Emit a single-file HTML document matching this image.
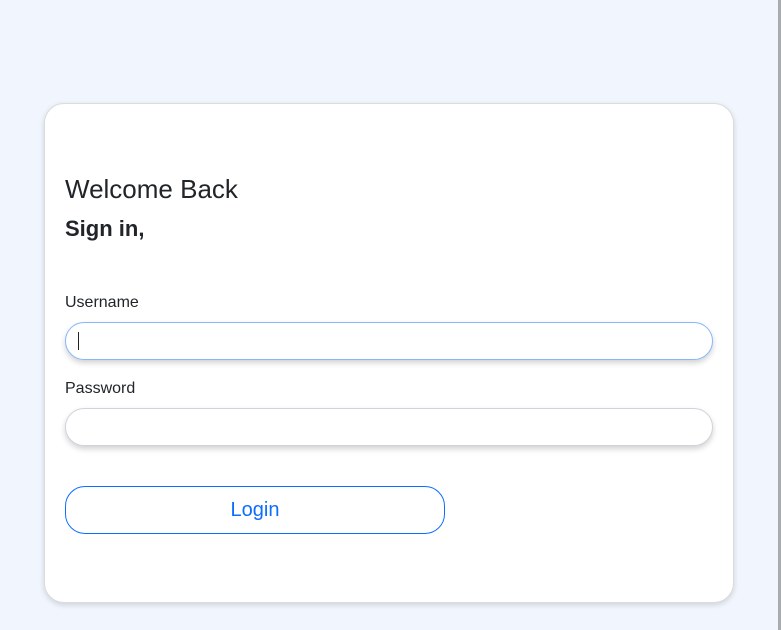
<!DOCTYPE html>
<html><head><style>
html,body{margin:0;padding:0;width:781px;height:630px;overflow:hidden;background:#f1f6fe;font-family:"Liberation Sans",Roboto,sans-serif;color:#212529}
.sb{position:absolute;left:778px;top:0;width:3px;height:630px;background:#a9acad}
.card{position:absolute;left:44px;top:103px;width:688px;height:498px;background:#fff;border:1px solid #dcdcdc;border-radius:20px;box-shadow:0 2px 6px rgba(0,0,0,.15)}
h1{position:absolute;left:20px;top:69px;margin:0;font-size:26px;font-weight:500;line-height:32px}
h2{position:absolute;left:20px;top:111px;margin:0;font-size:22px;font-weight:600;line-height:28px}
.lbl{position:absolute;left:20px;font-size:16px;line-height:20px}
.in{position:absolute;left:20px;width:646px;height:36px;border:1px solid #d0d4da;border-radius:19px;box-shadow:0 3px 6px rgba(0,0,0,.18);background:#fff}
.in.f{border-color:#86b7fe}
.cur{position:absolute;left:12px;top:9px;width:1px;height:18px;background:#222}
.btn{position:absolute;left:20px;top:382px;width:378px;height:46px;border:1px solid #0d6efd;border-radius:20px;color:#0d6efd;font-size:20px;line-height:46px;text-align:center}
</style></head><body>
<div class="sb"></div>
<div class="card">
<h1>Welcome Back</h1>
<h2>Sign in,</h2>
<div class="lbl" style="top:189px">Username</div>
<div class="in f" style="top:218px"><div class="cur"></div></div>
<div class="lbl" style="top:275px">Password</div>
<div class="in" style="top:304px"></div>
<div class="btn">Login</div>
</div>
</body></html>
